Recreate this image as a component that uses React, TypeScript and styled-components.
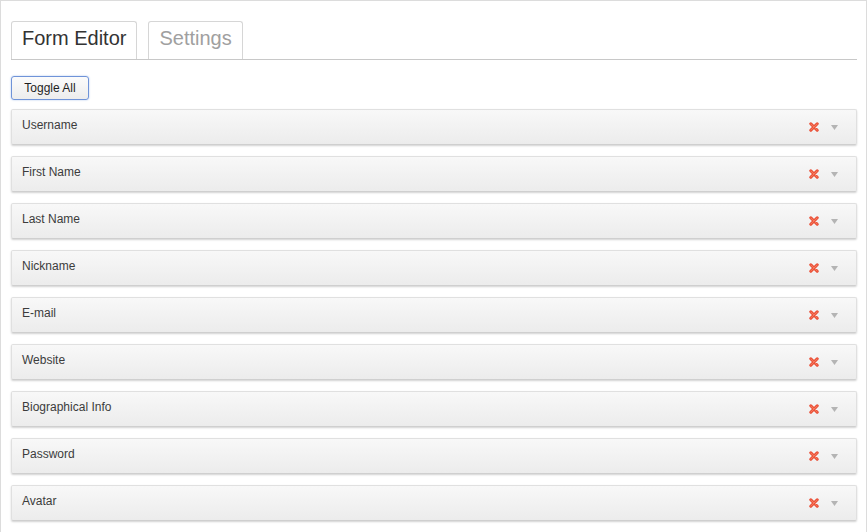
import React from "react";
import styled, { createGlobalStyle } from "styled-components";

const Global = createGlobalStyle`
  html, body { margin: 0; padding: 0; background: #fff; }
  body { font-family: Arial, "Liberation Sans", sans-serif; }
`;

const Page = styled.div`
  width: 867px;
  height: 532px;
  box-sizing: border-box;
  border-top: 1px solid #dcdcdc;
  border-left: 1px solid #dcdcdc;
  border-right: 1px solid #dcdcdc;
  padding: 20px 9px 0 10px;
  overflow: hidden;
`;

const TabBar = styled.div`
  display: flex;
  align-items: flex-end;
  gap: 11px;
  border-bottom: 1px solid #c8c8c8;
  height: 38px;
`;

const Tab = styled.div<{ $active?: boolean }>`
  box-sizing: border-box;
  height: 38px;
  padding: 3px 10px 0 10px;
  border: 1px solid #d6d6d6;
  border-bottom: none;
  border-radius: 3px 3px 0 0;
  background: #fff;
  font-size: 20px;
  line-height: 26px;
  color: ${(p) => (p.$active ? "#333" : "#a0a0a0")};
`;

const Toolbar = styled.div`
  display: flex;
  align-items: flex-start;
  padding-top: 16px;
  height: 23px;
`;

const Button = styled.button`
  box-sizing: border-box;
  height: 24px;
  width: 78px;
  padding: 0;
  border: 1px solid #6f93d8;
  border-radius: 3px;
  background: linear-gradient(#fbfbfb, #ededed);
  box-shadow: 0 0 2px #a9c0ea;
  font-family: Arial, "Liberation Sans", sans-serif;
  font-size: 12px;
  color: #1e1e1e;
  cursor: pointer;
`;

const List = styled.div`
  display: flex;
  flex-direction: column;
  gap: 11px;
  padding-top: 10px;
`;

const Row = styled.div`
  box-sizing: border-box;
  height: 36px;
  display: flex;
  align-items: flex-start;
  padding: 8px 18px 0 10px;
  border: 1px solid #e0e0e0;
  border-bottom-color: #cfcfcf;
  border-radius: 2px;
  background: linear-gradient(#f8f8f8, #ececec);
  box-shadow: 0 1px 2px rgba(0, 0, 0, 0.18);
`;

const Label = styled.span`
  flex: 1;
  font-size: 12px;
  line-height: 14px;
  color: #3c3c3c;
`;

const Icons = styled.div`
  display: flex;
  align-items: center;
  gap: 12px;
  margin-top: 4px;
`;

const RemoveIcon = () => (
  <svg width="10" height="10" viewBox="0 0 10 10">
    <path d="M1.8 1.8 L8.2 8.2 M8.2 1.8 L1.8 8.2" stroke="#e8452c" strokeWidth="3" strokeLinecap="round" />
    <path d="M1.8 1.8 L8.2 8.2 M8.2 1.8 L1.8 8.2" stroke="#f57a5e" strokeWidth="1.1" strokeLinecap="round" />
  </svg>
);

const Caret = () => (
  <svg width="7" height="5" viewBox="0 0 7 5">
    <path d="M0 0 H7 L3.5 5 Z" fill="#b4b4b4" />
  </svg>
);

const fields = [
  "Username",
  "First Name",
  "Last Name",
  "Nickname",
  "E-mail",
  "Website",
  "Biographical Info",
  "Password",
  "Avatar",
];

export default function App() {
  return (
    <>
      <Global />
      <Page>
        <TabBar>
          <Tab $active>Form Editor</Tab>
          <Tab>Settings</Tab>
        </TabBar>
        <Toolbar>
          <Button>Toggle All</Button>
        </Toolbar>
        <List>
          {fields.map((f) => (
            <Row key={f}>
              <Label>{f}</Label>
              <Icons>
                <RemoveIcon />
                <Caret />
              </Icons>
            </Row>
          ))}
        </List>
      </Page>
    </>
  );
}
